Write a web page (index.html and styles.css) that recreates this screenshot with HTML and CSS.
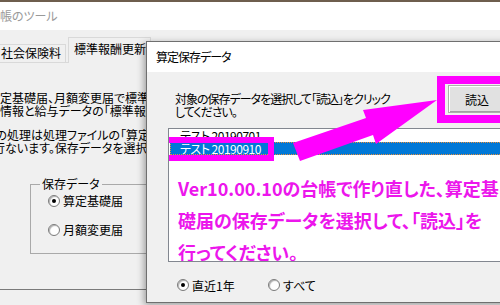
FILE: index.html
```html
<!DOCTYPE html>
<html>
<head>
<meta charset="utf-8">
<title>算定保存データ</title>
<link rel="stylesheet" href="styles.css">
</head>
<body>
<div class="screen">
  <div class="strip"></div>

  <!-- main tool window behind the dialog -->
  <div class="bgwin">
    <div class="bg-title">帳のツール</div>
    <div class="tabs">
      <div class="tab">社会保険料</div>
      <div class="tab sel">標準報酬更新</div>
    </div>
    <div class="panel">
      <div class="para">
        <div>定基礎届、月額変更届で標準報酬月額を更新します。</div>
        <div>情報と給与データの「標準報酬月額」を更新します。</div>
      </div>
      <div class="para">
        <div class="cut3">この処理は処理ファイルの「算定基礎届」で</div>
        <div class="cut4">行ないます。保存データを選択してください。</div>
      </div>
      <fieldset class="group">
        <legend>保存データ</legend>
        <div class="opt"><span class="radio on"></span>算定基礎届</div>
        <div class="opt"><span class="radio"></span>月額変更届</div>
      </fieldset>
      <div class="panel-foot"></div>
    </div>
  </div>

  <!-- dialog window -->
  <div class="dlg">
    <div class="dlg-title">算定保存データ</div>
    <div class="dlg-head">
      <div class="dlg-msg">対象の保存データを選択して「読込」をクリック<br>してください。</div>
      <div class="mark">
        <button type="button" class="btn">読込</button>
      </div>
    </div>
    <div class="list">
      <div class="item">テスト 20190701</div>
      <div class="item sel">テスト 20190910</div>
      <div class="mark-item"></div>
      <div class="note">Ver10.00.10の台帳で作り直した、算定基<br>礎届の保存データを選択して、「読込」を<br>行ってください。</div>
    </div>
    <div class="dlg-foot">
      <div class="opt wide"><span class="radio on"></span>直近1年</div>
      <div class="opt"><span class="radio"></span>すべて</div>
    </div>
  </div>

  <!-- annotation arrow -->
  <svg class="arrow" width="500" height="305" viewBox="0 0 500 305">
    <polygon points="293,143 366,118 363,110 437,100 376,144 373,135 300,161" fill="#ff00ff"/>
  </svg>
</div>
</body>
</html>
```

FILE: styles.css
```css
* {
  box-sizing: border-box;
}

body {
  margin: 0;
  background: #f0f0f0;
  font-family: "Noto Sans CJK JP", "Noto Sans", sans-serif;
  font-size: 12px;
  font-feature-settings: "palt";
  color: #000000;
}

.screen {
  position: relative;
  width: 500px;
  height: 305px;
  overflow: hidden;
  background: #f0f0f0;
}

.strip {
  height: 2px;
  background: #6e5e4e;
}

/* background window */
.bg-title {
  height: 28px;
  line-height: 28px;
  background: #ffffff;
  color: #999999;
}

.tabs {
  display: flex;
  align-items: flex-end;
  height: 33px;
  border-bottom: 1px solid #d9d9d9;
}

.tab {
  height: 18px;
  line-height: 16px;
  margin-left: -5px;
  padding: 0 4px 0 5px;
  border: 1px solid #d9d9d9;
  border-bottom: none;
  white-space: nowrap;
}

.tab.sel {
  height: 26px;
  line-height: 22px;
  margin-left: 2px;
  margin-bottom: -1px;
  padding-left: 5px;
  background: #f0f0f0;
}

.panel {
  padding-top: 29px;
}

.para {
  line-height: 12.5px;
  white-space: nowrap;
}

.para + .para {
  margin-top: 12px;
}

.cut3 {
  margin-left: -15px;
}

.cut4 {
  margin-left: -7px;
}

.group {
  width: 200px;
  height: 76px;
  margin: 24px 0 0 30px;
  padding: 4px 0 0 9px;
  border: 1px solid #a9a9a9;
}

.group legend {
  padding: 0 2px;
  line-height: 12px;
}

.group .opt {
  margin-left: 8px;
  margin-bottom: 16px;
}

.opt {
  display: flex;
  align-items: center;
  gap: 3px;
  height: 13px;
  white-space: nowrap;
}

.radio {
  position: relative;
  width: 12px;
  height: 12px;
  border: 1px solid #7a7a7a;
  border-radius: 50%;
  background: #ffffff;
  box-shadow: inset 1px 1px 1px #b0b0b0;
}

.radio.on::after {
  content: "";
  position: absolute;
  left: 3px;
  top: 3px;
  width: 4px;
  height: 4px;
  border-radius: 50%;
  background: #000000;
}

.panel-foot {
  margin-top: 35px;
  border-top: 1px solid #7a7a7a;
}

/* dialog */
.dlg {
  position: absolute;
  left: 146px;
  top: 41px;
  width: 370px;
  height: 262px;
  background: #f0f0f0;
  border: 1px solid #6f6f6f;
  box-shadow: -2px 2px 7px rgba(0, 0, 0, 0.35);
}

.dlg-title {
  height: 30px;
  line-height: 30px;
  padding-left: 9px;
  letter-spacing: -1px;
  background: #ffffff;
}

.dlg-head {
  display: flex;
  align-items: flex-start;
  padding: 4px 0 0 28px;
}

.dlg-msg {
  width: 262px;
  margin-top: 16px;
  line-height: 13px;
  letter-spacing: -1px;
  white-space: nowrap;
}

.mark {
  padding: 1px 0 2px 3px;
  border: 8px solid #ff00ff;
}

.btn {
  display: flex;
  align-items: center;
  justify-content: center;
  width: 58px;
  height: 28px;
  padding: 0;
  font: inherit;
  background: #e1e1e1;
  border: 1px solid #adadad;
  box-shadow: inset 1px 1px 0 #ffffff, inset -1px -1px 0 #a0a0a0;
}

.list {
  position: relative;
  height: 134px;
  margin: 5px 0 0 21px;
  background: #ffffff;
  border: 1px solid #828790;
  overflow: hidden;
}

.item {
  height: 13px;
  line-height: 13px;
  padding-left: 11px;
  letter-spacing: -0.5px;
  white-space: nowrap;
}

.item.sel {
  margin-left: 1px;
  padding-left: 10px;
  background: #0078d7;
  color: #ffffff;
  outline: 1px dotted #e8903a;
  outline-offset: -1px;
}

.mark-item {
  position: absolute;
  left: -6px;
  top: 8px;
  width: 111px;
  height: 24px;
  border: 6px solid #ff00ff;
}

.note {
  margin-top: 16.5px;
  padding-left: 9px;
  font-size: 18px;
  font-weight: bold;
  line-height: 32px;
  color: #ec16ec;
  white-space: nowrap;
}

.dlg-foot {
  display: flex;
  margin-top: 16.5px;
  padding-left: 30px;
}

.opt.wide {
  width: 91px;
}

.arrow {
  position: absolute;
  left: 0;
  top: 0;
  pointer-events: none;
}
```
